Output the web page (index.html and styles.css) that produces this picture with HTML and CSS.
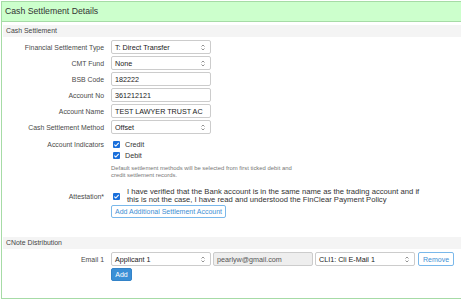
FILE: index.html
```html
<!DOCTYPE html>
<html lang="en">
<head>
    <meta charset="UTF-8">
    <title>Cash Settlement Details</title>
    <link rel="stylesheet" href="styles.css">
</head>
<body>
    <div class="panel">
        <div class="panel-heading">Cash Settlement Details</div>
        <div class="panel-body">
            <div class="section-heading">Cash Settlement</div>
            <div class="form">
                <div class="row">
                    <label class="label">Financial Settlement Type</label>
                    <div class="control select">
                        <span>T: Direct Transfer</span>
                        <svg class="arrows" width="4" height="7" viewBox="0 0 4 7"><path d="M0.5 2.5 L2 1 L3.5 2.5 M0.5 4.5 L2 6 L3.5 4.5" fill="none" stroke="#777" stroke-width="0.8"/></svg>
                    </div>
                </div>
                <div class="row">
                    <label class="label">CMT Fund</label>
                    <div class="control select">
                        <span>None</span>
                        <svg class="arrows" width="4" height="7" viewBox="0 0 4 7"><path d="M0.5 2.5 L2 1 L3.5 2.5 M0.5 4.5 L2 6 L3.5 4.5" fill="none" stroke="#777" stroke-width="0.8"/></svg>
                    </div>
                </div>
                <div class="row">
                    <label class="label">BSB Code</label>
                    <div class="control">182222</div>
                </div>
                <div class="row">
                    <label class="label">Account No</label>
                    <div class="control">361212121</div>
                </div>
                <div class="row">
                    <label class="label">Account Name</label>
                    <div class="control">TEST LAWYER TRUST AC</div>
                </div>
                <div class="row">
                    <label class="label">Cash Settlement Method</label>
                    <div class="control select">
                        <span>Offset</span>
                        <svg class="arrows" width="4" height="7" viewBox="0 0 4 7"><path d="M0.5 2.5 L2 1 L3.5 2.5 M0.5 4.5 L2 6 L3.5 4.5" fill="none" stroke="#777" stroke-width="0.8"/></svg>
                    </div>
                </div>

                <div class="row-top indicators">
                    <label class="label check-label">Account Indicators</label>
                    <div class="checks">
                        <div class="check-line">
                            <span class="checkbox"><svg width="7" height="7" viewBox="0 0 7 7"><path d="M1.3 3.6 L2.8 5 L5.7 1.8" fill="none" stroke="#fff" stroke-width="1.1"/></svg></span>
                            <span>Credit</span>
                        </div>
                        <div class="check-line">
                            <span class="checkbox"><svg width="7" height="7" viewBox="0 0 7 7"><path d="M1.3 3.6 L2.8 5 L5.7 1.8" fill="none" stroke="#fff" stroke-width="1.1"/></svg></span>
                            <span>Debit</span>
                        </div>
                        <p class="help">Default settlement methods will be selected from first ticked debit and<br>credit settlement records.</p>
                    </div>
                </div>

                <div class="row-mid attestation">
                    <label class="label">Attestation*</label>
                    <span class="checkbox"><svg width="7" height="7" viewBox="0 0 7 7"><path d="M1.3 3.6 L2.8 5 L5.7 1.8" fill="none" stroke="#fff" stroke-width="1.1"/></svg></span>
                    <p class="attest-text">I have verified that the Bank account is in the same name as the trading account and if<br>this is not the case, I have read and understood the FinClear Payment Policy</p>
                </div>
                <div class="row-plain add-account">
                    <button class="btn btn-outline">Add Additional Settlement Account</button>
                </div>
            </div>

            <div class="section-heading cnote">CNote Distribution</div>
            <div class="form">
                <div class="row">
                    <label class="label">Email 1</label>
                    <div class="control select">
                        <span>Applicant 1</span>
                        <svg class="arrows" width="4" height="7" viewBox="0 0 4 7"><path d="M0.5 2.5 L2 1 L3.5 2.5 M0.5 4.5 L2 6 L3.5 4.5" fill="none" stroke="#777" stroke-width="0.8"/></svg>
                    </div>
                    <div class="control readonly">pearlyw@gmail.com</div>
                    <div class="control select">
                        <span>CLI1: Cli E-Mail 1</span>
                        <svg class="arrows" width="4" height="7" viewBox="0 0 4 7"><path d="M0.5 2.5 L2 1 L3.5 2.5 M0.5 4.5 L2 6 L3.5 4.5" fill="none" stroke="#777" stroke-width="0.8"/></svg>
                    </div>
                    <button class="btn btn-outline btn-remove">Remove</button>
                </div>
                <div class="row-plain">
                    <button class="btn btn-primary">Add</button>
                </div>
            </div>
        </div>
    </div>
</body>
</html>
```

FILE: styles.css
```css
/* styles.css */

body {
    font-family: "Liberation Sans", Arial, sans-serif;
    margin: 0;
    background-color: #fff;
    overflow: hidden;
}

.panel {
    margin: 1px 0 0 1px;
    width: 480px;
    height: 298px;
    border: 1px solid #a6dba6;
    border-right: none;
    box-sizing: border-box;
}

.panel-heading {
    background-color: #ccffcc;
    height: 19px;
    line-height: 19px;
    border-bottom: 1px solid #a6dba6;
    padding-left: 3px;
    font-size: 8.7px;
    color: #333;
}

.panel-body {
    padding: 3px 0 0 1px;
}

.section-heading {
    background-color: #f4f4f4;
    height: 12px;
    line-height: 12px;
    padding-left: 3px;
    font-size: 6.9px;
    color: #444;
}

.section-heading.cnote {
    margin-top: 19px;
}

.form {
    padding-top: 3px;
}

.row,
.row-top,
.row-mid,
.row-plain {
    display: flex;
    margin-bottom: 2px;
}

.row {
    align-items: center;
    height: 14px;
}

.row-mid {
    align-items: center;
}

.row-plain {
    padding-left: 108px;
}

.label {
    width: 108px;
    flex-shrink: 0;
    box-sizing: border-box;
    padding-right: 7px;
    text-align: right;
    font-size: 6.9px;
    color: #4a4a4a;
}

.control {
    width: 100px;
    height: 14px;
    box-sizing: border-box;
    border: 1px solid #ccc;
    border-radius: 2px;
    padding: 0 3px;
    font-size: 7.2px;
    color: #222;
    display: flex;
    align-items: center;
    justify-content: space-between;
    margin-right: 2px;
    white-space: nowrap;
}

.select .arrows {
    margin-right: 2px;
}

.readonly {
    background-color: #eee;
    color: #555;
}

.indicators {
    margin-top: 5px;
}

.check-label {
    line-height: 11px;
}

.check-line {
    display: flex;
    align-items: center;
    height: 11px;
    font-size: 7.2px;
    color: #333;
}

.checkbox {
    display: inline-flex;
    width: 7px;
    height: 7px;
    background-color: #1a6fdb;
    border-radius: 1px;
    margin: 0 5px 0 2px;
    flex-shrink: 0;
}

.help {
    margin: 4px 0 0;
    font-size: 5.9px;
    line-height: 7px;
    color: #777;
}

.attestation {
    margin-top: 9px;
    margin-bottom: 0;
}

.attestation .checkbox {
    margin-right: 7px;
}

.attest-text {
    margin: 0;
    font-size: 7.65px;
    line-height: 8px;
    color: #333;
    white-space: nowrap;
}

.add-account {
    margin-top: 1px;
}

.btn {
    font-family: "Liberation Sans", Arial, sans-serif;
    border-radius: 2px;
    cursor: pointer;
    padding: 0 3px;
    height: 13px;
    font-size: 7px;
    box-sizing: border-box;
}

.btn-outline {
    background-color: #fff;
    border: 1px solid #7ab8ea;
    color: #3f8fd4;
}

.btn-remove {
    width: 36px;
    height: 14px;
    padding: 0;
    margin-left: 1px;
}

.btn-primary {
    background-color: #3a8fd6;
    border: 1px solid #3383c8;
    color: #fff;
    width: 21px;
    padding: 0;
}
```
